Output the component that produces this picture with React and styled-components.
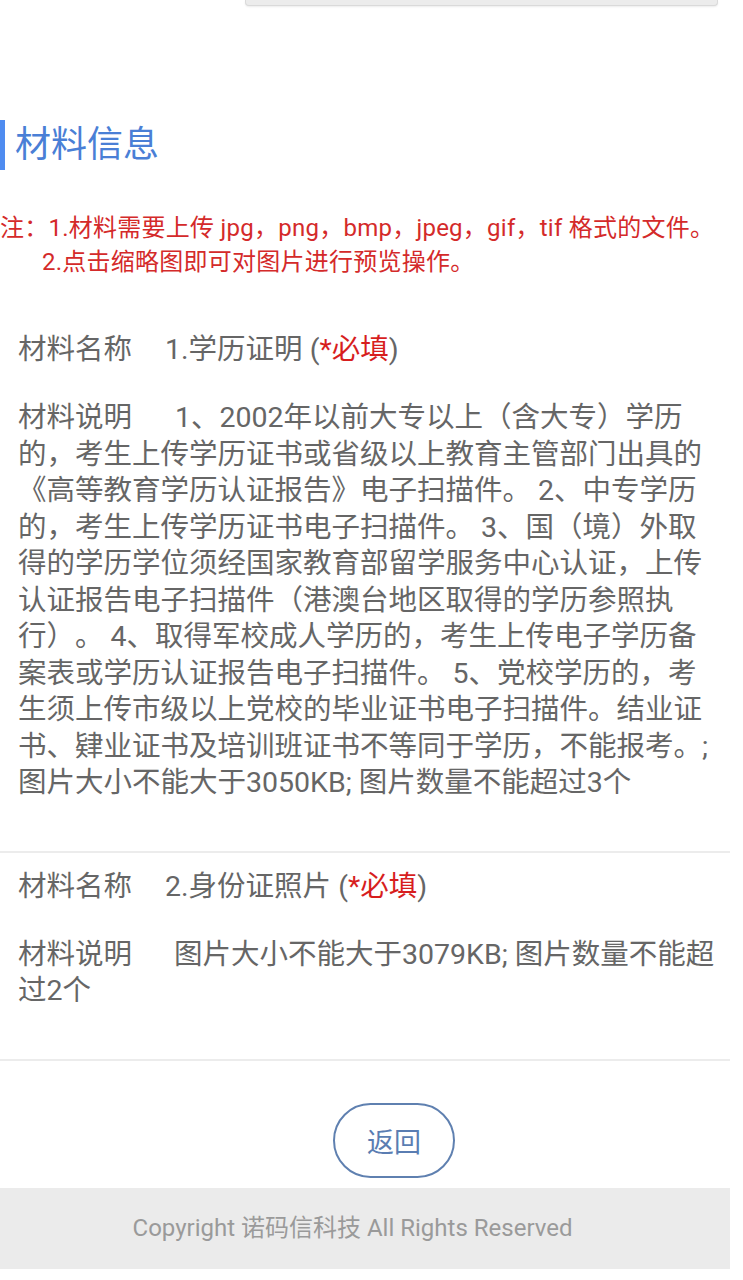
import React from 'react';
import styled, { createGlobalStyle } from 'styled-components';

const GlobalStyle = createGlobalStyle`
    body {
        margin: 0;
        background: #fff;
        font-family: Roboto, "Noto Sans CJK SC", sans-serif;
    }
`;

const materials = [
    {
        name: '1.学历证明',
        required: true,
        descGap: 43,
        desc: '1、2002年以前大专以上（含大专）学历的，考生上传学历证书或省级以上教育主管部门出具的《高等教育学历认证报告》电子扫描件。 2、中专学历的，考生上传学历证书电子扫描件。 3、国（境）外取得的学历学位须经国家教育部留学服务中心认证，上传认证报告电子扫描件（港澳台地区取得的学历参照执行）。 4、取得军校成人学历的，考生上传电子学历备案表或学历认证报告电子扫描件。 5、党校学历的，考生须上传市级以上党校的毕业证书电子扫描件。结业证书、肄业证书及培训班证书不等同于学历，不能报考。;图片大小不能大于3050KB; 图片数量不能超过3个',
    },
    {
        name: '2.身份证照片',
        required: true,
        descGap: 42,
        desc: '图片大小不能大于3079KB; 图片数量不能超过2个',
    },
];

const App = () => {
    return (
        <Page>
            <GlobalStyle />
            <TopInput />

            <SectionTitle>材料信息</SectionTitle>

            <Notice>
                <div>注：1.材料需要上传 jpg，png，bmp，jpeg，gif，tif 格式的文件。</div>
                <NoticeLine>2.点击缩略图即可对图片进行预览操作。</NoticeLine>
            </Notice>

            <MaterialList>
                {materials.map(item => (
                    <MaterialItem key={item.name}>
                        <NameRow>
                            <Label $gap={33}>材料名称</Label>
                            {item.name} (
                            {item.required && <Required>*必填</Required>}
                            )
                        </NameRow>
                        <Desc>
                            <Label $gap={item.descGap}>材料说明</Label>
                            {item.desc}
                        </Desc>
                    </MaterialItem>
                ))}
            </MaterialList>

            <ButtonRow>
                <BackButton type="button">返回</BackButton>
            </ButtonRow>

            <Footer>Copyright 诺码信科技 All Rights Reserved</Footer>
        </Page>
    );
};

const Page = styled.div`
    width: 730px;
    padding-bottom: 11px;
    color: #666;
    text-spacing-trim: space-all;
`;

const TopInput = styled.div`
    margin-left: 245px;
    width: 471px;
    height: 5px;
    background: #ececec;
    border: 1px solid #dadada;
    border-top: none;
    border-radius: 0 0 4px 4px;
    box-shadow: 0 1px 2px rgba(0, 0, 0, 0.08);
`;

const SectionTitle = styled.h2`
    margin: 114px 0 0;
    height: 50px;
    padding-left: 10px;
    border-left: 5px solid #4f8cf0;
    font-size: 36px;
    font-weight: normal;
    line-height: 50px;
    color: #4a7fd6;
`;

const Notice = styled.div`
    margin-top: 41px;
    font-size: 24px;
    line-height: 34px;
    letter-spacing: 0.25px;
    color: #d42a2a;
    white-space: nowrap;
`;

const NoticeLine = styled.div`
    padding-left: 42px;
`;

const MaterialList = styled.div`
    margin-top: 37px;
`;

const MaterialItem = styled.div`
    padding: 16px 12px 49px 18px;
    border-bottom: 2px solid #ececec;
    font-size: 28.5px;
`;

const NameRow = styled.div`
    line-height: 36px;
`;

const Label = styled.span`
    margin-right: ${props => props.$gap}px;
`;

const Required = styled.span`
    color: #d71e1e;
`;

const Desc = styled.div`
    margin-top: 32px;
    line-height: 36.5px;
`;

const ButtonRow = styled.div`
    display: flex;
    justify-content: center;
    padding-left: 58px;
    margin-top: 42px;
`;

const BackButton = styled.button`
    width: 122px;
    height: 75px;
    border: 2px solid #5f80b0;
    border-radius: 38px;
    background: #fff;
    color: #5a7db2;
    font-family: Roboto, "Noto Sans CJK SC", sans-serif;
    font-size: 27px;
    cursor: pointer;
`;

const Footer = styled.div`
    margin-top: 10px;
    height: 81px;
    padding-right: 25px;
    background: #ebebeb;
    color: #9a9a9a;
    font-size: 24px;
    line-height: 81px;
    text-align: center;
`;

export default App;
